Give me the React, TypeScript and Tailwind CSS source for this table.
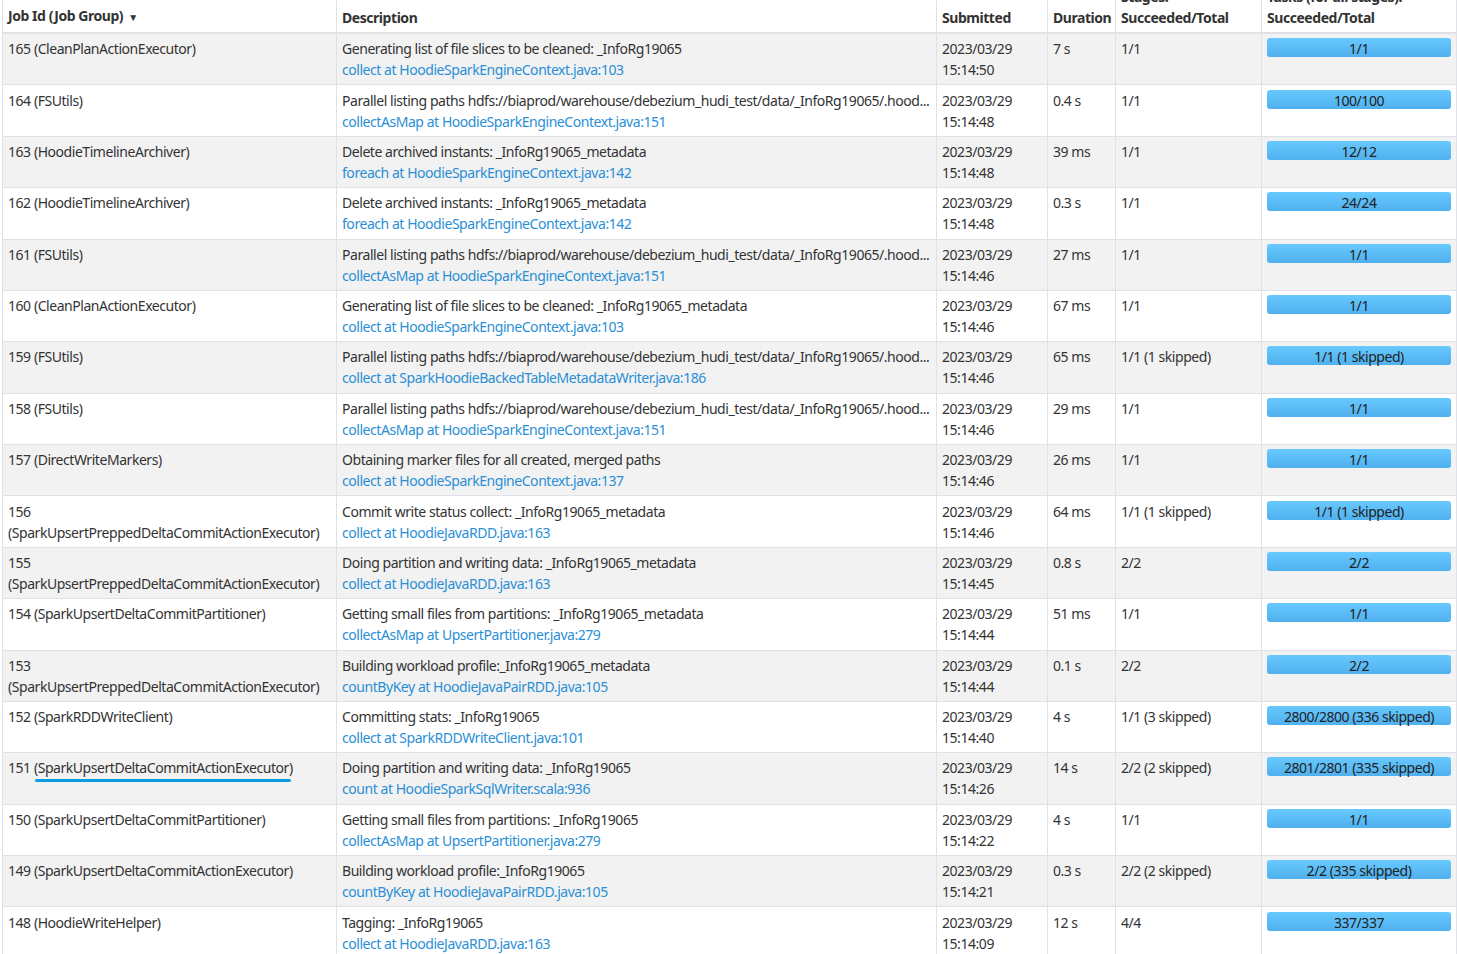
type Job = {
  id: number
  group: string
  desc: string
  link: string
  time: string
  duration: string
  stages: string
  tasks: string
  mark?: boolean
}

const parallel = "Parallel listing paths hdfs://biaprod/warehouse/debezium_hudi_test/data/_InfoRg19065/.hood..."

const jobs: Job[] = [
  { id: 165, group: "CleanPlanActionExecutor", desc: "Generating list of file slices to be cleaned: _InfoRg19065", link: "collect at HoodieSparkEngineContext.java:103", time: "15:14:50", duration: "7 s", stages: "1/1", tasks: "1/1" },
  { id: 164, group: "FSUtils", desc: parallel, link: "collectAsMap at HoodieSparkEngineContext.java:151", time: "15:14:48", duration: "0.4 s", stages: "1/1", tasks: "100/100" },
  { id: 163, group: "HoodieTimelineArchiver", desc: "Delete archived instants: _InfoRg19065_metadata", link: "foreach at HoodieSparkEngineContext.java:142", time: "15:14:48", duration: "39 ms", stages: "1/1", tasks: "12/12" },
  { id: 162, group: "HoodieTimelineArchiver", desc: "Delete archived instants: _InfoRg19065_metadata", link: "foreach at HoodieSparkEngineContext.java:142", time: "15:14:48", duration: "0.3 s", stages: "1/1", tasks: "24/24" },
  { id: 161, group: "FSUtils", desc: parallel, link: "collectAsMap at HoodieSparkEngineContext.java:151", time: "15:14:46", duration: "27 ms", stages: "1/1", tasks: "1/1" },
  { id: 160, group: "CleanPlanActionExecutor", desc: "Generating list of file slices to be cleaned: _InfoRg19065_metadata", link: "collect at HoodieSparkEngineContext.java:103", time: "15:14:46", duration: "67 ms", stages: "1/1", tasks: "1/1" },
  { id: 159, group: "FSUtils", desc: parallel, link: "collect at SparkHoodieBackedTableMetadataWriter.java:186", time: "15:14:46", duration: "65 ms", stages: "1/1 (1 skipped)", tasks: "1/1 (1 skipped)" },
  { id: 158, group: "FSUtils", desc: parallel, link: "collectAsMap at HoodieSparkEngineContext.java:151", time: "15:14:46", duration: "29 ms", stages: "1/1", tasks: "1/1" },
  { id: 157, group: "DirectWriteMarkers", desc: "Obtaining marker files for all created, merged paths", link: "collect at HoodieSparkEngineContext.java:137", time: "15:14:46", duration: "26 ms", stages: "1/1", tasks: "1/1" },
  { id: 156, group: "SparkUpsertPreppedDeltaCommitActionExecutor", desc: "Commit write status collect: _InfoRg19065_metadata", link: "collect at HoodieJavaRDD.java:163", time: "15:14:46", duration: "64 ms", stages: "1/1 (1 skipped)", tasks: "1/1 (1 skipped)" },
  { id: 155, group: "SparkUpsertPreppedDeltaCommitActionExecutor", desc: "Doing partition and writing data: _InfoRg19065_metadata", link: "collect at HoodieJavaRDD.java:163", time: "15:14:45", duration: "0.8 s", stages: "2/2", tasks: "2/2" },
  { id: 154, group: "SparkUpsertDeltaCommitPartitioner", desc: "Getting small files from partitions: _InfoRg19065_metadata", link: "collectAsMap at UpsertPartitioner.java:279", time: "15:14:44", duration: "51 ms", stages: "1/1", tasks: "1/1" },
  { id: 153, group: "SparkUpsertPreppedDeltaCommitActionExecutor", desc: "Building workload profile:_InfoRg19065_metadata", link: "countByKey at HoodieJavaPairRDD.java:105", time: "15:14:44", duration: "0.1 s", stages: "2/2", tasks: "2/2" },
  { id: 152, group: "SparkRDDWriteClient", desc: "Committing stats: _InfoRg19065", link: "collect at SparkRDDWriteClient.java:101", time: "15:14:40", duration: "4 s", stages: "1/1 (3 skipped)", tasks: "2800/2800 (336 skipped)" },
  { id: 151, group: "SparkUpsertDeltaCommitActionExecutor", desc: "Doing partition and writing data: _InfoRg19065", link: "count at HoodieSparkSqlWriter.scala:936", time: "15:14:26", duration: "14 s", stages: "2/2 (2 skipped)", tasks: "2801/2801 (335 skipped)", mark: true },
  { id: 150, group: "SparkUpsertDeltaCommitPartitioner", desc: "Getting small files from partitions: _InfoRg19065", link: "collectAsMap at UpsertPartitioner.java:279", time: "15:14:22", duration: "4 s", stages: "1/1", tasks: "1/1" },
  { id: 149, group: "SparkUpsertDeltaCommitActionExecutor", desc: "Building workload profile:_InfoRg19065", link: "countByKey at HoodieJavaPairRDD.java:105", time: "15:14:21", duration: "0.3 s", stages: "2/2 (2 skipped)", tasks: "2/2 (335 skipped)" },
  { id: 148, group: "HoodieWriteHelper", desc: "Tagging: _InfoRg19065", link: "collect at HoodieJavaRDD.java:163", time: "15:14:09", duration: "12 s", stages: "4/4", tasks: "337/337" },
]

const th = "border-x border-[#dee2e6] border-b-2 px-[5px] py-[4px] text-left align-bottom font-bold"
const td = "border border-[#dee2e6] px-[5px] py-[4.2px] align-top"

const App = () => {
  return (
    <div className="h-[954px] overflow-hidden bg-white pl-[2px] text-[14px] leading-[21px] tracking-[-0.45px] text-[#333]" style={{ fontFamily: '"Noto Sans", "Open Sans", sans-serif' }}>
      <table className="-mt-[18px] w-[1454px] table-fixed border-collapse">
        <colgroup>
          <col className="w-[334px]" />
          <col className="w-[600px]" />
          <col className="w-[111px]" />
          <col className="w-[68px]" />
          <col className="w-[146px]" />
          <col className="w-[195px]" />
        </colgroup>
        <thead>
          <tr>
            <th className={th}>
              Job Id (Job Group) <span className="ml-[2px] text-[10px]">▼</span>
            </th>
            <th className={th}>Description</th>
            <th className={th}>Submitted</th>
            <th className={th}>Duration</th>
            <th className={th}>Stages:<br />Succeeded/Total</th>
            <th className={th}>Tasks (for all stages):<br />Succeeded/Total</th>
          </tr>
        </thead>
        <tbody>
          {jobs.map((j, i) => (
            <tr key={j.id} className={i % 2 === 0 ? "bg-[#f2f2f2]" : "bg-white"}>
              <td className={td}>
                {j.id}{" "}
                <span className="relative whitespace-nowrap">
                  ({j.group})
                  {j.mark && <span className="absolute left-[1px] right-[2px] -bottom-[5px] h-[3px] rounded-full bg-[#0a9be0]" />}
                </span>
              </td>
              <td className={td}>
                <div className="overflow-hidden whitespace-nowrap">{j.desc}</div>
                <div className="whitespace-nowrap text-[#2a8fd6]">{j.link}</div>
              </td>
              <td className={td}>
                2023/03/29
                <br />
                {j.time}
              </td>
              <td className={td}>{j.duration}</td>
              <td className={td}>{j.stages}</td>
              <td className={td}>
                <div className="flex h-[19px] items-center justify-center rounded-[3px] bg-gradient-to-b from-[#68c9ff] to-[#4fb0ee] pt-[2px] text-[#222]">
                  {j.tasks}
                </div>
              </td>
            </tr>
          ))}
        </tbody>
      </table>
    </div>
  )
}

export default App
